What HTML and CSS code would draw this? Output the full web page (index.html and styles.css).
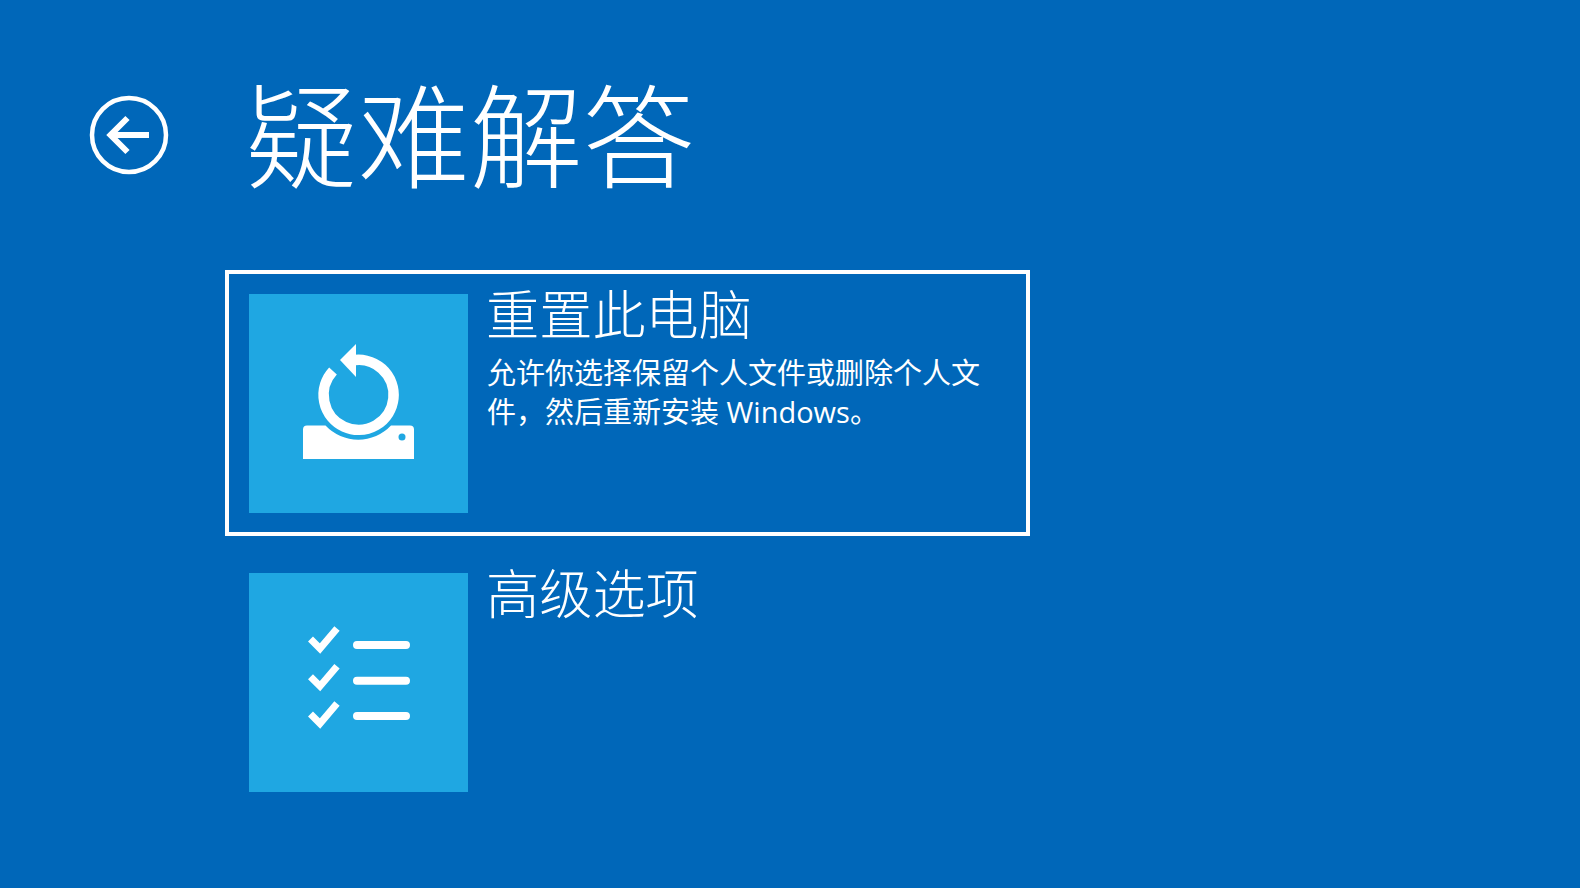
FILE: index.html
```html
<!DOCTYPE html>
<html lang="zh-CN">
<head>
<meta charset="utf-8">
<title>疑难解答</title>
<link rel="stylesheet" href="styles.css">
</head>
<body>
<main class="screen">
  <header class="header">
    <button class="back" aria-label="返回">
      <svg class="back-icon" viewBox="0 0 80 80">
        <circle cx="40" cy="40" r="37" fill="none" stroke="#fff" stroke-width="4.500"/>
        <path d="M60 40H22M38.500 23L21.500 40L38.500 57" fill="none" stroke="#fff" stroke-width="6"/>
      </svg>
    </button>
    <h1 class="title">疑难解答</h1>
  </header>
  <section class="options">
    <div class="option option-selected">
      <div class="tile">
        <svg class="tile-icon" viewBox="0 0 219 219">
          <path d="M58 131.500H76.500A45 45 0 0 0 142 131.500H161Q165 131.500 165 135.500V165H54V135.500Q54 131.500 58 131.500Z" fill="#fff"/>
          <circle cx="153" cy="143" r="3.500" fill="#1fa7e2"/>
          <path d="M102 66.700A35 35 0 1 1 84 77" fill="none" stroke="#fff" stroke-width="10.500"/>
          <path d="M91 66L107 50V83Z" fill="#fff"/>
        </svg>
      </div>
      <div class="text">
        <h2 class="name">重置此电脑</h2>
        <p class="desc">允许你选择保留个人文件或删除个人文件，然后重新安装 Windows。</p>
      </div>
    </div>
    <div class="option">
      <div class="tile">
        <svg class="tile-icon" viewBox="0 0 219 219">
          <path d="M61.500 66L71 75.500L88 55.500M61.500 103.700L71 113.200L88 93.200M61.500 141L71 150.500L88 130.500" fill="none" stroke="#fff" stroke-width="7"/>
          <path d="M108 72H157M108 107.700H157M108 143H157" fill="none" stroke="#fff" stroke-width="8" stroke-linecap="round"/>
        </svg>
      </div>
      <div class="text">
        <h2 class="name">高级选项</h2>
      </div>
    </div>
  </section>
</main>
</body>
</html>
```
FILE: styles.css
```css
* {
  box-sizing: border-box;
}
html, body {
  margin: 0;
  height: 100%;
}
body {
  background: #0067b9;
  color: #fff;
  font-family: "Noto Sans CJK SC", "Open Sans", sans-serif;
  overflow: hidden;
}
.screen {
  display: flex;
  flex-direction: column;
  padding: 64px 0 0 89px;
}
.header {
  display: flex;
  align-items: flex-start;
  height: 141px;
  margin-bottom: 65px;
}
.back {
  display: block;
  width: 80px;
  height: 80px;
  margin-top: 31px;
  padding: 0;
  border: 0;
  background: none;
}
.back-icon {
  display: block;
  width: 80px;
  height: 80px;
}
.title {
  margin: 0 0 0 76px;
  font-size: 112.500px;
  font-weight: 300;
  line-height: 132px;
}
.options {
  display: flex;
  flex-direction: column;
  gap: 13px;
  margin-left: 136px;
}
.option {
  display: flex;
  gap: 18px;
  width: 805px;
  height: 266px;
  padding: 20px 20px;
  border: 4px solid transparent;
}
.option-selected {
  border-color: #fff;
}
.tile {
  flex: none;
  width: 219px;
  height: 219px;
  background: #1fa7e2;
}
.tile-icon {
  display: block;
  width: 219px;
  height: 219px;
}
.text {
  flex: 1;
  margin-top: -13px;
}
.name {
  margin: 0 0 10px;
  font-size: 53.200px;
  font-weight: 300;
  line-height: 62px;
}
.desc {
  width: 500px;
  margin: 0 0 0 1px;
  font-family: "Open Sans", "Noto Sans CJK SC", sans-serif;
  font-size: 29px;
  font-weight: 400;
  line-height: 39px;
}
```
